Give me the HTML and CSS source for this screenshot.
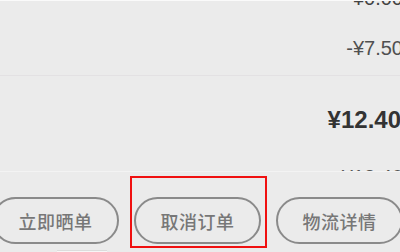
FILE: index.html
```html
<!DOCTYPE html>
<html lang="zh-CN">
<head>
<meta charset="utf-8">
<title>订单</title>
<link rel="stylesheet" href="styles.css">
</head>
<body>
<div class="page">
  <div class="scroll">
    <div class="content">
      <div class="row amount row-a">¥0.00</div>
      <div class="row amount row-b">-¥7.50</div>
      <div class="divider"></div>
      <div class="row total">¥12.40</div>
      <div class="row amount row-d">¥12.40</div>
    </div>
  </div>
  <div class="bar">
    <div class="buttons">
      <button class="btn">立即晒单</button>
      <button class="btn">取消订单</button>
      <button class="btn">物流详情</button>
    </div>
    <div class="highlight"></div>
    <div class="indicator"></div>
  </div>
</div>
</body>
</html>
```
FILE: styles.css
```css
html, body {
  margin: 0;
  padding: 0;
  background: #ebebeb;
}
.page {
  width: 400px;
  height: 252px;
  overflow: hidden;
  background: #ebebeb;
  font-family: "Liberation Sans", "Noto Sans CJK SC", sans-serif;
  display: flex;
  flex-direction: column;
}
.scroll {
  height: 171px;
  overflow: hidden;
  border-top: 1px solid #fafafa;
  box-sizing: border-box;
  flex: none;
}
.content {
  margin-top: -14px;
  display: flex;
  flex-direction: column;
}
.row {
  text-align: right;
  margin-right: -3px;
  white-space: nowrap;
}
.amount {
  font-size: 20px;
  line-height: 22px;
  color: #505050;
}
.row-a { color: #444; }
.row-b { margin-top: 28px; }
.divider {
  margin-top: 16px;
  height: 1px;
  background: #e3e1e3;
}
.total {
  margin-top: 31px;
  font-size: 24px;
  line-height: 26px;
  font-weight: bold;
  color: #333;
  margin-right: -1px;
}
.row-d {
  margin-top: 33px;
  color: #555;
}
.bar {
  position: relative;
  flex: 1;
  border-top: 1px solid #f3f3f3;
  background: #ebebeb;
}
.buttons {
  display: flex;
  gap: 15px;
  margin-left: -8px;
  padding-top: 25px;
}
.btn {
  flex: none;
  width: 127px;
  height: 47px;
  box-sizing: border-box;
  border: 2px solid #8a8a8a;
  border-radius: 24px;
  background: transparent;
  font-family: "Noto Sans CJK SC", sans-serif;
  font-size: 18px;
  font-weight: 500;
  color: #777;
  padding: 0;
  letter-spacing: 0.5px;
}
.highlight {
  position: absolute;
  left: 130px;
  top: 4px;
  width: 137px;
  height: 72px;
  box-sizing: border-box;
  border: 2px solid #f01010;
}
.indicator {
  position: absolute;
  left: 57px;
  top: 78px;
  width: 50px;
  height: 4px;
  background: #f6f6f6;
  border-top: 1px solid #dcdcdc;
}
```
